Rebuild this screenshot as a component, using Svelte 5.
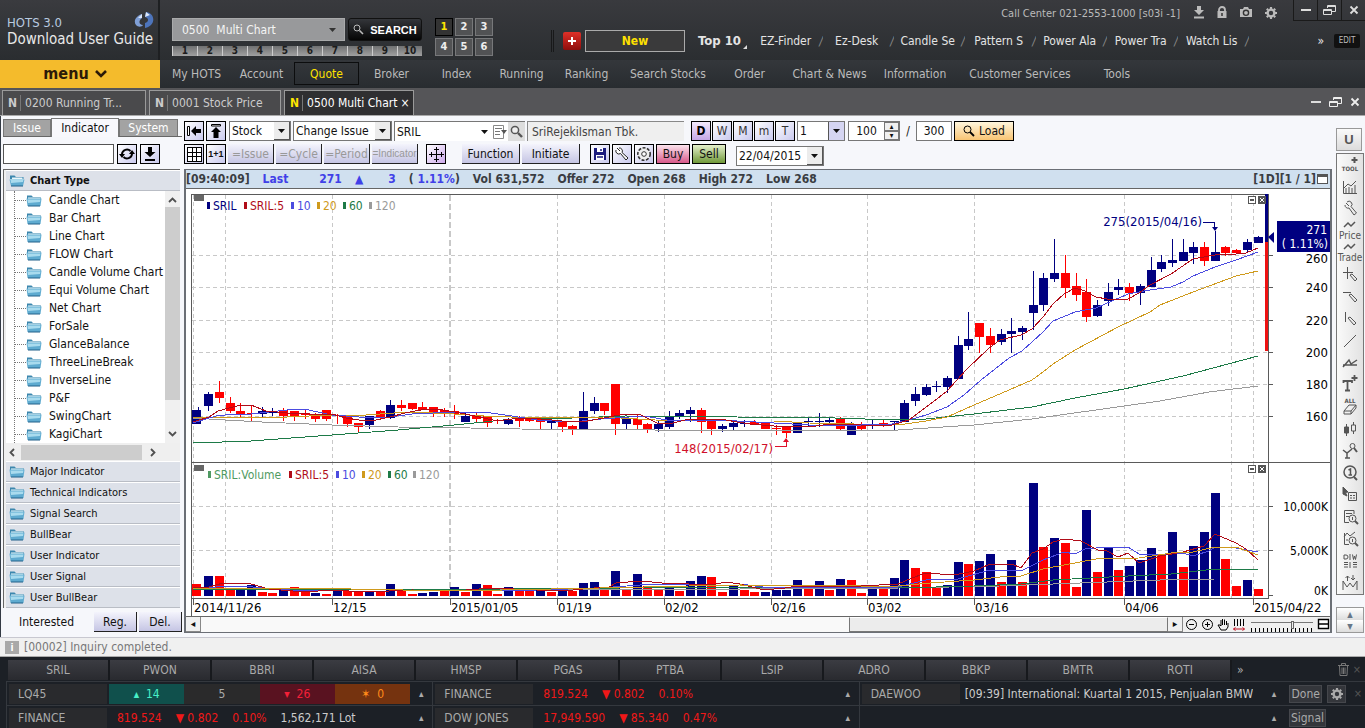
<script lang="ts">
  let command = $state('0500  Multi Chart');
  let period = $state('D');
  let activeDoc = $state(2);

  const slots = [1, 2, 3, 4, 5, 6, 7, 8, 9, 10];
  const screens = [1, 2, 3, 4, 5, 6];
  const favourites = ['EZ-Finder', 'Ez-Desk', 'Candle Se', 'Pattern S', 'Power Ala', 'Power Tra', 'Watch Lis'];

  const nav = [
    { label: 'My HOTS', width: 65 },
    { label: 'Account', width: 65 },
    { label: 'Quote', width: 65 },
    { label: 'Broker', width: 65 },
    { label: 'Index', width: 65 },
    { label: 'Running', width: 65 },
    { label: 'Ranking', width: 65 },
    { label: 'Search Stocks', width: 98 },
    { label: 'Order', width: 65 },
    { label: 'Chart & News', width: 95 },
    { label: 'Information', width: 76 },
    { label: 'Customer Services', width: 134 },
    { label: 'Tools', width: 60 }
  ];

  const docs = [
    { label: '0200 Running Tr...', width: 144 },
    { label: '0001 Stock Price', width: 132 },
    { label: '0500 Multi Chart', width: 130 }
  ];

  const tree = [
    'Candle Chart', 'Bar Chart', 'Line Chart', 'FLOW Chart', 'Candle Volume Chart', 'Equi Volume Chart', 'Net Chart',
    'ForSale', 'GlanceBalance', 'ThreeLineBreak', 'InverseLine', 'P&F', 'SwingChart', 'KagiChart'
  ];
  const groups = ['Major Indicator', 'Technical Indicators', 'Signal Search', 'BullBear', 'User Indicator', 'User Signal', 'User BullBear'];
  const periods = ['D', 'W', 'M', 'm', 'T'];
  const copies = ['=Issue', '=Cycle', '=Period', '=Indicator'];
  const tickers = ['SRIL', 'PWON', 'BBRI', 'AISA', 'HMSP', 'PGAS', 'PTBA', 'LSIP', 'ADRO', 'BBKP', 'BMTR', 'ROTI'];

  const tools = [
    'tool', 'chart', 'wrench', 'price', 'trade', 'cross', 'hline', 'vline', 'line', 'trend',
    'text', 'eraser', 'candles', 'fix', 'one', 'pointer', 'report', 'search', 'diw', 'range'
  ];

  // body top, body bottom, high, low, up/down
  const candles: [number, number, number, number, number][] = [
    [410, 424, 407, 424, 1], [394, 406, 392, 411, 1], [392, 398, 381, 403, 0], [403, 411, 397, 413, 0], [411, 414, 403, 417, 0],
    [413, 414, 405, 421, 0], [411, 414, 407, 417, 1], [412, 413, 408, 416, 1], [410, 416, 408, 421, 0], [411, 416, 411, 421, 0],
    [413, 415, 409, 419, 0], [414, 419, 413, 422, 0], [410, 419, 410, 421, 0], [415, 416, 414, 424, 0], [416, 424, 416, 427, 0],
    [423, 427, 423, 432, 0], [416, 425, 416, 429, 1], [411, 417, 410, 419, 0], [405, 418, 400, 419, 1], [405, 408, 400, 411, 0],
    [403, 409, 403, 410, 0], [407, 410, 402, 410, 0], [407, 412, 407, 417, 0], [410, 414, 408, 417, 0], [411, 414, 405, 419, 0],
    [416, 422, 412, 422, 1], [415, 419, 413, 423, 0], [416, 423, 416, 427, 0], [420, 421, 419, 424, 0], [420, 424, 418, 425, 1],
    [417, 421, 416, 427, 0], [419, 421, 418, 422, 0], [419, 422, 418, 429, 0], [421, 423, 420, 429, 1], [421, 427, 421, 432, 0],
    [426, 429, 425, 435, 0], [411, 429, 392, 429, 1], [403, 411, 397, 414, 1], [403, 411, 403, 415, 0], [384, 424, 384, 435, 0],
    [419, 424, 418, 429, 1], [419, 425, 415, 429, 0], [424, 429, 423, 433, 0], [424, 429, 420, 432, 1], [416, 427, 411, 429, 1],
    [413, 417, 410, 419, 1], [410, 414, 407, 422, 1], [410, 422, 408, 433, 0], [421, 429, 420, 435, 0], [426, 429, 424, 432, 1],
    [423, 427, 421, 431, 1], [423, 424, 420, 427, 1], [422, 425, 420, 425, 0], [423, 429, 423, 429, 0], [428, 429, 425, 435, 0],
    [427, 433, 427, 438, 0], [422, 433, 422, 433, 1], [421, 422, 417, 427, 1], [421, 422, 413, 427, 1], [420, 422, 418, 424, 1],
    [419, 429, 417, 430, 0], [426, 435, 422, 435, 1], [425, 429, 422, 430, 0], [424, 425, 420, 429, 1], [423, 425, 419, 427, 0],
    [421, 422, 421, 430, 1], [403, 422, 400, 422, 1], [394, 401, 387, 406, 1], [387, 395, 384, 396, 1], [386, 387, 381, 392, 1],
    [378, 387, 376, 393, 1], [345, 379, 336, 379, 1], [339, 346, 312, 350, 1], [323, 337, 323, 353, 0], [336, 345, 328, 353, 0],
    [334, 342, 329, 345, 1], [331, 334, 318, 353, 1], [328, 332, 326, 340, 1], [305, 313, 271, 330, 1], [278, 305, 273, 311, 1],
    [273, 279, 239, 282, 1], [273, 288, 255, 298, 0], [286, 295, 273, 301, 0], [292, 317, 279, 322, 0], [305, 316, 300, 317, 1],
    [292, 301, 283, 306, 1], [287, 290, 279, 295, 1], [287, 293, 283, 301, 0], [286, 293, 284, 305, 1], [270, 287, 257, 287, 1],
    [262, 269, 255, 272, 1], [260, 263, 239, 267, 1], [252, 261, 239, 261, 1], [247, 253, 242, 264, 1], [247, 261, 242, 266, 0],
    [252, 261, 231, 261, 1], [247, 253, 246, 256, 0], [250, 253, 249, 254, 0], [242, 250, 239, 252, 1], [237, 243, 236, 243, 1]
  ];

  const volumes = [
    12, 20, 20, 7, 6, 11, 4, 3, 7, 9, 4, 3, 2, 8, 5, 4, 5, 5, 12, 5, 2, 3, 4, 5, 9,
    4, 12, 11, 2, 9, 5, 5, 6, 4, 6, 5, 13, 14, 8, 25, 6, 22, 10, 6, 9, 5, 15, 20, 19, 4,
    10, 6, 4, 4, 6, 6, 16, 10, 15, 6, 17, 16, 3, 7, 7, 18, 36, 28, 24, 9, 11, 34, 32, 35, 42,
    14, 36, 14, 113, 49, 58, 53, 9, 86, 24, 49, 26, 30, 36, 48, 42, 64, 29, 50, 64, 103, 37, 10, 16, 7
  ];
  const downVolume = new Set([
    0, 2, 3, 6, 7, 9, 10, 12, 14, 15, 17, 19, 20, 23, 25, 27, 28, 30, 31, 33, 35, 38, 40, 42, 43, 45, 48, 49, 51, 52, 57, 59, 61,
    62, 64, 67, 68, 69, 72, 75, 77, 79, 81, 82, 84, 86, 90, 92, 96, 97, 99
  ]);

  const barX = (i: number) => Math.round(197.5 + i * 10.708);

  const priceLines = [
    { color: '#9a9a9a', points: '193,418 225,420 262,422 332,425 398,427 470,428 520,429 655,430 740,430 861,430 898,430 943,427 974,425 1032,419 1124,406 1160,401 1209,392 1258,386' },
    { color: '#1d7a47', points: '193,443 251,441 332,435 398,430 454,425 484,422 512,419 573,418 625,416 737,417 835,418 895,420 926,419 974,414 1032,407 1075,398 1124,389 1183,376 1258,356' },
    { color: '#cf9a1c', points: '193,417 225,417 287,417 332,415 366,415 394,413 412,412 454,414 484,416 537,418 604,417 655,420 737,421 774,421 809,423 898,425 926,421 947,417 974,405 1009,390 1032,380 1043,372 1053,364 1075,350 1118,327 1150,312 1160,305 1193,292 1236,276 1258,271' },
    { color: '#4b4be0', points: '193,423 216,416 225,415 251,414 287,410 304,409 332,415 359,417 390,417 412,414 454,412 484,412 512,416 537,420 573,422 601,419 644,416 673,421 691,420 737,421 774,423 809,425 861,425 892,424 909,420 926,415 947,407 964,395 981,380 1009,358 1022,351 1043,332 1053,321 1075,312 1096,308 1128,294 1150,290 1171,287 1183,282 1193,276 1215,267 1236,260 1258,252' },
    { color: '#b00c18', points: '193,422 209,417 218,411 229,408 241,405 251,405 266,411 287,413 309,414 332,414 346,418 359,420 376,420 390,417 405,413 426,409 437,409 455,412 475,416 497,421 519,418 541,419 562,421 582,422 604,418 625,414 641,415 657,423 673,423 689,419 709,419 726,420 737,422 750,424 774,426 797,426 809,427 830,424 861,425 878,426 892,425 909,420 933,402 947,391 967,369 988,349 1000,340 1021,335 1032,329 1043,317 1053,304 1064,294 1075,288 1085,291 1096,297 1107,299 1128,299 1139,293 1150,285 1171,274 1193,259 1215,255 1236,254 1246,253 1258,248' }
  ];

  const volumeLines = [
    { color: '#9a9a9a', points: '193,590 740,589 898,588 1000,586 1053,584 1107,582 1160,580 1215,579 1258,579' },
    { color: '#1d7a47', points: '193,589 500,589 740,587 898,588 974,586 1021,584 1053,580 1128,576 1171,574 1215,569 1258,569' },
    { color: '#4b4be0', points: '193,588 240,586 290,590 340,591 454,591 537,590 600,588 640,585 690,584 740,584 770,588 861,587 898,587 930,579 954,580 990,570 1021,571 1043,560 1064,552 1075,554 1085,549 1107,547 1128,547 1139,554 1171,554 1183,553 1193,556 1209,551 1215,547 1230,547 1258,552' },
    { color: '#b00c18', points: '193,588 209,587 223,583 251,584 269,589 305,592 332,590 366,592 412,590 454,591 491,588 537,590 573,590 594,588 609,587 616,583 641,581 662,583 689,584 716,584 726,582 740,584 764,590 785,588 797,586 861,586 898,584 912,578 926,573 954,575 974,571 990,564 1012,564 1021,568 1032,553 1043,549 1053,542 1064,539 1081,541 1098,550 1107,551 1118,557 1128,553 1139,563 1160,556 1183,552 1204,546 1215,534 1236,543 1246,549 1258,560' },
    { color: '#cf9a1c', points: '193,588 300,588 454,591 600,588 689,586 740,585 861,586 898,586 930,583 974,580 1000,577 1021,576 1043,569 1064,565 1096,559 1139,558 1171,553 1193,552 1215,547 1236,547 1258,555' }
  ];

  const dates = [
    { x: 193, label: '2014/11/26' },
    { x: 332, label: '12/15' },
    { x: 450, label: '2015/01/05' },
    { x: 557, label: '01/19' },
    { x: 664, label: '02/02' },
    { x: 771, label: '02/16' },
    { x: 867, label: '03/02' },
    { x: 974, label: '03/16' },
    { x: 1124, label: '04/06' },
    { x: 1253, label: '2015/04/22' }
  ];
  const gridX = [193, 225, 332, 557, 664, 771, 867, 974, 1124, 1231, 1253];
  const priceTicks = [
    { y: 255, label: '260' },
    { y: 287, label: '240' },
    { y: 320, label: '220' },
    { y: 352, label: '200' },
    { y: 384, label: '180' },
    { y: 416, label: '160' }
  ];
  const volumeTicks = [
    { y: 506, label: '10,000K' },
    { y: 550, label: '5,000K' }
  ];

  const priceLegend = [
    { x: 207, label: 'SRIL', color: '#000080' },
    { x: 244, label: 'SRIL:5', color: '#b00c18' },
    { x: 291, label: '10', color: '#4b4be0' },
    { x: 317, label: '20', color: '#cf9a1c' },
    { x: 343, label: '60', color: '#1d7a47' },
    { x: 369, label: '120', color: '#9a9a9a' }
  ];
  const volumeLegend = [
    { x: 208, label: 'SRIL:Volume', color: '#4f9a62' },
    { x: 289, label: 'SRIL:5', color: '#b00c18' },
    { x: 336, label: '10', color: '#4b4be0' },
    { x: 362, label: '20', color: '#cf9a1c' },
    { x: 388, label: '60', color: '#1d7a47' },
    { x: 413, label: '120', color: '#9a9a9a' }
  ];
</script>

{#snippet folder(open: boolean)}
  <svg width="16" height="13" viewBox="0 0 16 13" aria-hidden="true">
    <path d="M1 1.5 H5.5 L7 3 H14.5 V5 H1 Z" fill="#3d87ae" />
    <path d={open ? 'M3 3.5 H13.5 V6 H3 Z' : 'M2 3.5 H14 V5 H2 Z'} fill="#eaf6fb" />
    <path d={open ? 'M0.5 5.5 H15.5 L14 12 H2 Z' : 'M0.5 4.5 H15.5 L14.5 12 H1.5 Z'} fill="#5fabd0" />
    <path d="M1.5 5.500 H14.500 L14 8 L2 9 Z" fill="#a9dbee" />
    <path d="M2 12 H14" stroke="#22618a" />
  </svg>
{/snippet}

{#snippet down()}
  <svg width="7" height="4" viewBox="0 0 7 4" aria-hidden="true"><path d="M0 0 H7 L3.5 4 Z" fill="currentColor" /></svg>
{/snippet}

{#snippet gear()}
  <svg width="14" height="14" viewBox="0 0 14 14" aria-hidden="true">
    <circle cx="7" cy="7" r="3.4" fill="none" stroke="currentColor" stroke-width="2.4" />
    <path d="M7 1 V3 M7 11 V13 M1 7 H3 M11 7 H13 M2.8 2.8 L4 4 M10 10 L11.2 11.2 M2.8 11.2 L4 10 M10 4 L11.2 2.8" stroke="currentColor" stroke-width="2.2" />
  </svg>
{/snippet}

{#snippet restore()}
  <svg width="13" height="12" viewBox="0 0 13 12" aria-hidden="true">
    <path d="M4.5 4 V1.5 H12.5 V7.5 H9 M4.5 2.5 H12.5 M0.5 5.5 H8.5 V10.5 H0.5 Z M0.5 6.5 H8.5" fill="none" stroke="currentColor" />
  </svg>
{/snippet}

{#snippet closeX()}
  <svg width="10" height="10" viewBox="0 0 10 10" aria-hidden="true"><path d="M1.5 1.5 L8.5 8.5 M8.5 1.5 L1.5 8.5" stroke="currentColor" stroke-width="1.8" /></svg>
{/snippet}

<div class="app">
  <header>
    <div class="brand-col">
      <a class="brand" href="#guide">
        <span class="brand-name">HOTS 3.0</span>
        <span class="brand-guide">Download User Guide</span>
        <svg class="brand-logo" width="20" height="18" viewBox="0 0 20 18" aria-hidden="true">
          <path d="M8 2 C2 4 -1 9 2 13 C4 15.5 8 15 9 13 C5 13 4 9 8 6 Z" fill="#7f9fd6" />
          <path d="M12 0 C20 1 21 9 17 13 C15 15 12 16 11 16 L11 11 C15 10 15 6 11 5 Z" fill="#4d74bb" />
          <path d="M12 0 L11 5 L16 3 Z M8 2 L8 6 L4 6 Z" fill="#dbe6f8" />
        </svg>
      </a>
      <button class="menu">menu
        <svg width="12" height="8" viewBox="0 0 12 8" aria-hidden="true"><path d="M1 1 L6 6 L11 1" fill="none" stroke="#2c1a08" stroke-width="2.6" /></svg>
      </button>
    </div>

    <div class="head-main">
      <div class="head-top">
        <div class="command">
          <div class="command-row">
            <label class="command-box">
              <input bind:value={command} aria-label="Screen number" />
              {@render down()}
            </label>
            <button class="search">
              <svg width="11" height="11" viewBox="0 0 11 11" aria-hidden="true"><circle cx="4" cy="4" r="3" fill="none" stroke="#bbb" /><path d="M6.5 6.5 L10 10" stroke="#bbb" stroke-width="1.6" /></svg>
              SEARCH
            </button>
          </div>
          <div class="slots">
            {#each slots as slot}
              <button>{slot}</button>
            {/each}
          </div>
        </div>
        <div class="screens">
          {#each screens as screen}
            <button class:on={screen === 1}>{screen}</button>
          {/each}
        </div>

        <div class="head-right">
          <div class="call-row">
            <span class="call">Call Center 021-2553-1000 [s03i -1]</span>
            <span class="call-icons">
              <svg width="12" height="13" viewBox="0 0 12 13" aria-hidden="true"><path d="M4 0 H8 V4 H11 L6 9 L1 4 H4 Z M1 10.5 H11 V12.5 H1 Z" fill="currentColor" /></svg>
              <svg width="12" height="13" viewBox="0 0 12 13" aria-hidden="true"><path d="M3 6 V4 A3 3 0 0 1 9 4 V6" fill="none" stroke="currentColor" stroke-width="1.8" /><path d="M1.5 5 H10.5 V12 H1.5 Z" fill="currentColor" /><path d="M6 7 V10" stroke="#333" stroke-width="1.5" /></svg>
              <svg width="14" height="12" viewBox="0 0 14 12" aria-hidden="true"><path d="M1 3 H4 L5 1 H9 L10 3 H13 V11 H1 Z" fill="currentColor" /><circle cx="7" cy="6.8" r="2.6" fill="none" stroke="#333" stroke-width="1.4" /></svg>
              {@render gear()}
            </span>
            <div class="window-buttons">
              <button aria-label="Minimize"><span class="dash"></span></button>
              <button aria-label="Restore">{@render restore()}</button>
              <button aria-label="Close">{@render closeX()}</button>
            </div>
          </div>
          <div class="fav-row">
            <span class="grip"></span>
            <button class="plus" aria-label="Add">
              <svg width="8" height="8" viewBox="0 0 8 8" aria-hidden="true"><path d="M4 0 V8 M0 4 H8" stroke="#fff" stroke-width="2" /></svg>
            </button>
            <button class="new">New</button>
            <button class="top10">Top 10<svg width="4" height="4" viewBox="0 0 4 4" aria-hidden="true"><path d="M4 0 V4 H0 Z" fill="#ddd" /></svg></button>
            {#each favourites as fav}
              <a class="fav" href="#fav"><span>{fav}</span><i>/</i></a>
            {/each}
            <span class="more">»</span>
            <button class="edit">EDIT</button>
          </div>
        </div>
      </div>
      <nav>
        {#each nav as item}
          <a href="#nav" class:active={item.label === 'Quote'} style="width: {item.width}px">{item.label}</a>
        {/each}
      </nav>
    </div>
  </header>

  <div class="docs">
    {#each docs as doc, i}
      <button class="doc" class:active={activeDoc === i} style="width: {doc.width}px" onclick={() => (activeDoc = i)}>
        <b>N</b><span>{doc.label}</span>{#if i === 2}<em>×</em>{/if}
      </button>
    {/each}
    <div class="doc-buttons">
      <span class="dash"></span>
      {@render restore()}
      {@render closeX()}
    </div>
  </div>

  <main>
    <aside>
      <div class="side-tabs">
        <button>Issue</button>
        <button class="active">Indicator</button>
        <button>System</button>
      </div>
      <div class="side-find">
        <input aria-label="Find indicator" />
        <button class="tb" aria-label="Refresh">
          <svg width="16" height="16" viewBox="0 0 16 16" aria-hidden="true"><path d="M3 8 A5 5 0 0 1 11.5 5" fill="none" stroke="#000" stroke-width="2" /><path d="M13 8 A5 5 0 0 1 4.5 11" fill="none" stroke="#000" stroke-width="2" /><path d="M0 8 H6 L3 12 Z M10 8 H16 L13 4 Z" fill="#000" /></svg>
        </button>
        <button class="tb" aria-label="Download">
          <svg width="14" height="16" viewBox="0 0 14 16" aria-hidden="true"><path d="M5 1 H9 V6 H12.5 L7 11 L1.5 6 H5 Z M2 13 H12 V15 H2 Z" fill="#000" /></svg>
        </button>
      </div>
      <div class="list">
        <div class="group open">{@render folder(true)}Chart Type</div>
        <div class="tree-box">
          <ul class="tree">
            {#each tree as node}
              <li>{@render folder(false)}<span>{node}</span></li>
            {/each}
          </ul>
          <div class="vscroll">
            <svg width="9" height="6" viewBox="0 0 9 6" aria-hidden="true"><path d="M1 5 L4.5 1.5 L8 5" fill="none" stroke="#505050" stroke-width="1.8" /></svg>
            <span class="vthumb"></span>
            <svg width="9" height="6" viewBox="0 0 9 6" aria-hidden="true"><path d="M1 1 L4.5 4.5 L8 1" fill="none" stroke="#505050" stroke-width="1.8" /></svg>
          </div>
        </div>
        <div class="hscroll">
          <svg width="6" height="9" viewBox="0 0 6 9" aria-hidden="true"><path d="M5 1 L1.5 4.5 L5 8" fill="none" stroke="#505050" stroke-width="1.8" /></svg>
          <span class="hthumb"></span>
          <svg width="6" height="9" viewBox="0 0 6 9" aria-hidden="true"><path d="M1 1 L4.5 4.5 L1 8" fill="none" stroke="#505050" stroke-width="1.8" /></svg>
        </div>
        {#each groups as group}
          <div class="group">{@render folder(false)}{group}</div>
        {/each}
      </div>
      <div class="side-foot">
        <span>Interested</span>
        <button class="flat">Reg.</button>
        <button class="flat">Del.</button>
      </div>
    </aside>

    <section class="center">
      <div class="toolbar">
        <button class="tb" aria-label="Collapse left">
          <svg width="16" height="12" viewBox="0 0 16 12" aria-hidden="true"><path d="M1.5 1.5 H3.5 V10.5 H1.5 Z" fill="#fff" stroke="#000" /><path d="M5 6 L10 1 V4 H15 V8 H10 V11 Z" fill="#000" /></svg>
        </button>
        <button class="tb" aria-label="Collapse top">
          <svg width="12" height="16" viewBox="0 0 12 16" aria-hidden="true"><path d="M1.5 1.5 H10.5 V3 H1.5 Z" fill="#fff" stroke="#000" /><path d="M6 4 L11 9 H8.5 V15 H3.5 V9 H1 Z" fill="#000" /></svg>
        </button>
        <label class="drop w-stock"><select aria-label="Market"><option>Stock</option></select><span class="knob">{@render down()}</span></label>
        <label class="drop w-change"><select aria-label="Mode"><option>Change Issue</option></select><span class="knob">{@render down()}</span></label>
        <div class="code">
          <input value="SRIL" aria-label="Stock code" />
          {@render down()}
          <svg width="16" height="14" viewBox="0 0 16 14" aria-hidden="true"><path d="M1.5 0.5 H11.5 V13.5 H1.5 Z" fill="#fff" stroke="#888" /><path d="M3 3.5 H10 M3 6.5 H8 M3 9.5 H8" stroke="#777" /><path d="M9 5 H15 L12 9 Z" fill="#555" /></svg>
          <button aria-label="Find stock">
            <svg width="13" height="13" viewBox="0 0 13 13" aria-hidden="true"><circle cx="5" cy="5" r="3.6" fill="#eee" stroke="#555" stroke-width="1.5" /><path d="M8 8 L12 12" stroke="#555" stroke-width="2.4" /></svg>
          </button>
        </div>
        <input class="name" value="SriRejekiIsman Tbk." aria-label="Stock name" readonly />
        <div class="periods">
          {#each periods as p}
            <button class="tb period" class:on={period === p} onclick={() => (period = p)}>{p}</button>
          {/each}
        </div>
        <label class="drop w-unit"><select aria-label="Unit"><option>1</option></select><span class="knob lilac">{@render down()}</span></label>
        <div class="spin">
          <input value="100" aria-label="Bars" />
          <span><button aria-label="More bars">▴</button><button aria-label="Fewer bars">▾</button></span>
        </div>
        <span class="slash">/</span>
        <input class="total" value="300" aria-label="Total bars" />
        <button class="load">
          <svg width="12" height="12" viewBox="0 0 12 12" aria-hidden="true"><circle cx="4.5" cy="4.5" r="3.5" fill="none" stroke="#000" /><path d="M7 7 L11 11" stroke="#000" stroke-width="1.8" /></svg>
          Load
        </button>
      </div>

      <div class="toolbar second">
        <button class="tb" aria-label="Grid">
          <svg width="15" height="15" viewBox="0 0 15 15" aria-hidden="true" shape-rendering="crispEdges"><path d="M0.5 0.5 H14.5 V14.5 H0.5 Z M0.5 5.5 H14.5 M0.5 9.5 H14.5 M5.5 0 V15 M9.5 0 V15" fill="#fff" stroke="#000" /></svg>
        </button>
        <button class="tb tiny">1+1</button>
        {#each copies as copy}
          <button class="flat off" class:small={copy === '=Indicator'} disabled>{copy}</button>
        {/each}
        <button class="tb plum" aria-label="Crosshair">
          <svg width="15" height="15" viewBox="0 0 15 15" aria-hidden="true" shape-rendering="crispEdges"><path d="M7.5 0 V15 M0 7.5 H15 M5 2.5 H10 M5 12.5 H10 M2.5 5 V10 M12.5 5 V10" stroke="#000" /></svg>
        </button>
        <button class="flat func">Function</button>
        <button class="flat init">Initiate</button>
        <button class="tb save" aria-label="Save">
          <svg width="14" height="14" viewBox="0 0 14 14" aria-hidden="true"><path d="M1 1 H13 V13 H1 Z" fill="#1b1b7e" /><path d="M4 1 H10 V5 H4 Z M3 8 H11 V13 H3 Z" fill="#fff" /><path d="M8 2 V4 M4 10 H10" stroke="#1b1b7e" stroke-width="1.5" /></svg>
        </button>
        <button class="tb" aria-label="Settings">
          <svg width="14" height="14" viewBox="0 0 14 14" aria-hidden="true"><path d="M2 1 L5 4 M1 3 A3 3 0 0 0 5.5 6.5 L11 13 L13 11 L7 5.5 A3 3 0 0 0 4 1" fill="#fff" stroke="#222" /></svg>
        </button>
        <button class="tb" aria-label="Options">
          <svg width="16" height="16" viewBox="0 0 16 16" aria-hidden="true"><circle cx="8" cy="8" r="6.2" fill="#eee" stroke="#333" stroke-width="1.6" stroke-dasharray="3 1.5" /><circle cx="8" cy="8" r="2.3" fill="#fff" stroke="#333" /></svg>
        </button>
        <button class="trade buy">Buy</button>
        <button class="trade sell">Sell</button>
        <label class="drop w-date"><select aria-label="Date"><option>22/04/2015</option></select><span class="knob">{@render down()}</span></label>
      </div>

      <div class="frame">
        <div class="info">
          <span>[09:40:09]</span>
          <span class="up">Last</span>
          <span class="up price">271</span>
          <span class="up">▲</span>
          <span class="up diff">3</span>
          <span>( <b class="up">1.11%</b>)</span>
          <span>Vol 631,572</span>
          <span>Offer 272</span>
          <span>Open 268</span>
          <span>High 272</span>
          <span>Low 268</span>
          <span class="page">[1D][1 / 1]</span>
          <button aria-label="Window"></button>
        </div>

        <svg class="chart" viewBox="186 189 1144 427" role="img" aria-label="SRIL daily chart">
          <rect x="186" y="189" width="1144" height="427" fill="#fff" />
          <g shape-rendering="crispEdges">
            <g stroke="#c8c8c8" stroke-dasharray="4 3">
              {#each gridX as x}
                <path d="M{x + 0.5} 195 V598" />
              {/each}
              {#each [...priceTicks, ...volumeTicks] as tick}
                <path d="M192 {tick.y + 0.5} H1268" />
              {/each}
              <path d="M450 195 V598" stroke-width="2" stroke-dasharray="6 3" />
            </g>
            <path d="M191.5 616 V194.5 H1268.5 V598.5 H191.5 M191 462.5 H1330" fill="none" stroke="#5a5a5a" />

            {#each candles as [top, bottom, high, low, up], i}
              <g fill={up ? '#000080' : '#ff0000'}>
                <rect x={i === 0 ? 192 : barX(i) - 4} y={top} width="9" height={Math.max(bottom - top, 1)} />
                <rect x={barX(i)} y={high} width="1" height={low - high} />
              </g>
            {/each}
            {#each volumes as height, i}
              <rect x={i === 0 ? 192 : barX(i) - 4} y={596 - height} width="9" {height} fill={downVolume.has(i) ? '#ff0000' : '#000080'} />
            {/each}
            {#each [...priceLines, ...volumeLines] as line}
              <polyline points={line.points} fill="none" stroke={line.color} />
            {/each}

            <rect x="1265" y="194" width="3" height="48" fill="#000080" />
            <rect x="1265" y="242" width="3" height="109" fill="#ee1111" />
            {#each [...priceTicks, ...volumeTicks, { y: 595, label: '' }] as tick}
              <path d="M1269 {tick.y + 0.5} H1273" stroke="#5a5a5a" />
            {/each}
            {#each dates as date}
              <path d="M{date.x + 0.5} 599 V605" stroke="#5a5a5a" />
            {/each}
            <path d="M1203 222.5 H1214.5 V230" fill="none" stroke="#000080" />
            <path d="M775 446.5 H786.5 V439" fill="none" stroke="#e0102a" />
            {#each [195, 465] as y}
              <rect x="194" {y} width="10" height="6" fill="#666" />
            {/each}
            {#each [196, 465] as y}
              <rect x="1248.5" y={y + 0.5} width="7" height="7" fill="#fff" stroke="#555" />
              <rect x="1250" y={y + 3} width="4" height="2" fill="#555" />
              <rect x="1258" {y} width="8" height="8" fill="#555" />
            {/each}
            {#each priceLegend as item}
              <rect x={item.x} y="202" width="3" height="7" fill={item.color} />
            {/each}
            {#each volumeLegend as item}
              <rect x={item.x} y="471" width="3" height="7" fill={item.color} />
            {/each}
            <rect x="1277" y="221" width="53" height="31" fill="#000080" />
          </g>

          <path d="M1260 198 L1264 202 M1264 198 L1260 202 M1260 467 L1264 471 M1264 467 L1260 471" stroke="#fff" />
          <path d="M1268 237 L1274 232 V243 Z M1212 227 H1218 L1215 231 Z" fill="#000080" />
          <path d="M783 442 H789 L786 438 Z" fill="#e0102a" />

          {#each priceLegend as item}
            <text x={item.x + 6} y="210" fill={item.color}>{item.label}</text>
          {/each}
          {#each volumeLegend as item}
            <text x={item.x + 6} y="479" fill={item.color}>{item.label}</text>
          {/each}
          <text class="scale" x="1202" y="226" text-anchor="end" fill="#000080">275(2015/04/16)</text>
          <text class="scale" x="773" y="453" text-anchor="end" fill="#d0102a">148(2015/02/17)</text>
          {#each priceTicks as tick}
            <text class="scale" x="1328" y={tick.y + (tick.label === '260' ? 8 : 5)} text-anchor="end">{tick.label}</text>
          {/each}
          <text x="1327" y="234" text-anchor="end" fill="#fff">271</text>
          <text x="1328" y="248" text-anchor="end" fill="#fff">( 1.11%)</text>
          {#each volumeTicks as tick}
            <text x="1328" y={tick.y + 5} text-anchor="end">{tick.label}</text>
          {/each}
          <text x="1328" y="595" text-anchor="end">0K</text>
          {#each dates as date}
            <text class="scale" x={date.x + 1} y="612">{date.label}</text>
          {/each}
        </svg>

        <div class="chart-foot">
          <button class="arrow" aria-label="Scroll left">◂</button>
          <div class="track"><span></span></div>
          <button class="arrow" aria-label="Scroll right">▸</button>
          <svg width="60" height="15" viewBox="0 0 60 15" aria-hidden="true" fill="none" stroke="#000">
            <circle cx="6.5" cy="7.5" r="5" /><path d="M4 7.5 H9" />
            <circle cx="22.5" cy="7.5" r="5" /><path d="M20 7.5 H25 M22.5 5 V10" />
            <path d="M36 13 L33 8 L35 8 L36 9 V3 M37.5 8 V2 M39.5 8 V2.5 M41.5 8 V4 M43 6 V10 L41 13 H36" />
            <path d="M49.5 2 V9 M52.5 2 V9 M55.5 2 V9 M58.5 2 V9" />
            <path d="M48.5 12 H59.5 M50.5 10.5 L48.5 12 L50.5 13.5 M57.5 10.5 L59.5 12 L57.5 13.5" stroke="#c01020" />
          </svg>
          <input type="range" min="0" max="100" value="68" aria-label="Zoom" />
          <svg width="13" height="13" viewBox="0 0 13 13" aria-hidden="true"><path d="M1.5 1.5 H11.5 V10.5 H1.5 Z M1.5 6 H11.5" fill="#fff" stroke="#000" stroke-width="1.4" /></svg>
        </div>
      </div>
    </section>

    <div class="rail">
      <button class="u">U</button>
      <div class="rail-box">
        {#each tools as tool}
          <button aria-label={tool}>
            <svg width="26" height="22" viewBox="0 0 26 22" fill="none" stroke="#555" aria-hidden="true">
              {#if tool === 'tool'}
                <path d="M17.5 3 V9 M14.5 6 H20.5" stroke-width="2" /><text class="micro" x="13" y="17">TOOL</text>
              {:else if tool === 'chart'}
                <path d="M6.5 5 V17.5 H20 M9 17 V12 M12 17 V11 M15 17 V12 M18 17 V9" /><path d="M7 12 L11 8 L14 10 L19 5" />
              {:else if tool === 'wrench'}
                <path d="M9 5 L12 8 M8 7 A3 3 0 0 0 12 10 L17 17 L19.5 15 L14 8.5 A3 3 0 0 0 10 4" />
              {:else if tool === 'price' || tool === 'trade'}
                <path d="M7 7 L11 3 L14 6 L18 2" stroke-width="1.5" /><text class="word" x="13" y="19">{tool === 'price' ? 'Price' : 'Trade'}</text>
              {:else if tool === 'cross'}
                <path d="M10.5 3 V15 M6 8.5 H16 M13 11 L15 10 L20 15 L18 17 Z" />
              {:else if tool === 'hline'}
                <path d="M6 6.5 H14 M12 9 L14 8 L20 14 L18 16 Z" />
              {:else if tool === 'vline'}
                <path d="M8.5 4 V14 M11 10 L13 9 L19 15 L17 17 Z" />
              {:else if tool === 'line'}
                <path d="M7 17 L19 5" />
              {:else if tool === 'trend'}
                <path d="M6 15 L12 8 L14 12 L20 8 M6 13 H20" stroke-width="1.5" />
              {:else if tool === 'text'}
                <path d="M6.5 9 V7 H15 V9 M10.5 7 V16 M8 16.5 H13" stroke-width="1.8" /><path d="M17.5 1 V7 M14.5 4 H20.5" stroke-width="1.8" />
              {:else if tool === 'eraser'}
                <text class="micro" x="13" y="7">ALL</text><path d="M7 15 L12 9 H19 L14 15 Z M7 15 V18 H14 L19 12 V9 M14 15 V18" />
              {:else if tool === 'candles'}
                <path d="M9.5 6 V18" /><path d="M7.5 9 H11.5 V15 H7.5 Z" fill="#555" /><path d="M16.5 4 V7 M16.5 13 V16 M14.5 7 H18.5 V13 H14.5 Z" />
              {:else if tool === 'fix'}
                <path d="M6 10 L10 13 L15 9 M10 13 V18 M8 18 H13" stroke-width="1.5" /><circle cx="15.5" cy="6" r="2.5" /><path d="M17 8 L20 12" stroke-width="2" />
              {:else if tool === 'one'}
                <circle cx="13" cy="10" r="6" stroke-width="1.5" /><path d="M11.5 8 L13.5 7 V13 M11.5 13 H15" stroke-width="1.5" /><path d="M17 15 L20 18" stroke-width="2" />
              {:else if tool === 'pointer'}
                <path d="M6 3 L11 8 L8.5 8.5 L10 12 L8 11 L6 10 Z" fill="#555" /><path d="M11.5 8.5 H19.5 V16.5 H11.5 Z M13 11.5 H15 M16 11.5 H18 M13 14 H15 M16 14 H18" />
              {:else if tool === 'report' || tool === 'search'}
                <path d={tool === 'report' ? 'M17 8 V4.5 H7.5 V16.5 H12 M9 7.5 H15 M9 10.5 H12' : 'M7.5 5 V16.5 H12 M7 9 L10 5 L13 8 L18 4 M9 12 H11'} />
                <circle cx="15.5" cy="12.5" r="3.5" /><path d="M18 15 L21 18" stroke-width="2" /><path d="M15.5 11 V14" />
              {:else if tool === 'diw'}
                <path d="M7 5 H9 Q11 5 11 7 T9 9 H7 Z M13 4 V10 M15.5 4.500 L16.5 9.5 L17.5 6 L18.5 9.5 L19.5 4.5 M7 12.5 H11 M7 14.5 H11 M7 17 H11 M13 12 V18 M16 12.5 H20 M16 14.5 H20 M16 17 H20" />
              {:else}
                <path d="M6 18 V9 L10 15 L13 11 L16 15 L20 9 V18" /><path d="M10.5 9 V4 M8.5 6 L10.5 4 L12.5 6 M16 3 V8 M14 6 L16 8 L18 6" />
              {/if}
            </svg>
          </button>
        {/each}
      </div>
      <div class="rail-spin">
        <button aria-label="Scroll tools up">▴</button>
        <button aria-label="Scroll tools down">▾</button>
      </div>
    </div>
  </main>

  <div class="status"><i>i</i>[00002] Inquiry completed.</div>

  <footer>
    <div class="tickers">
      {#each tickers as code}
        <button>{code}</button>
      {/each}
      <span>»</span>
      <svg class="trash" width="11" height="13" viewBox="0 0 11 13" fill="none" stroke="#777" aria-hidden="true"><path d="M0 2.5 H11 M3.5 2 V0.5 H7.5 V2 M1.5 3 L2 12.5 H9 L9.5 3 M4 4.5 V11 M5.5 4.5 V11 M7 4.5 V11" /></svg>
      <small>×</small>
    </div>
    <div class="boards">
      <div class="board">
        <span class="tag">LQ45</span>
        <span class="cell teal">▴&nbsp; 14</span>
        <span class="cell grey">5</span>
        <span class="cell wine">▾&nbsp; 26</span>
        <span class="cell rust">✶&nbsp; 0</span>
        <button aria-label="Expand">▴</button>
      </div>
      <div class="board">
        <span class="tag">FINANCE</span>
        <span class="loss">819.524</span><span class="loss">▼ 0.802</span><span class="loss">0.10%</span>
        <button aria-label="Expand">▴</button>
      </div>
      <div class="board">
        <span class="tag">DAEWOO</span>
        <span class="news">[09:39] International: Kuartal 1 2015, Penjualan BMW</span>
        <button aria-label="Expand">▴</button>
      </div>
      <div class="board-end"><button>Done</button><button class="cog" aria-label="Ticker settings">{@render gear()}</button><small>×</small></div>
    </div>
    <div class="boards">
      <div class="board">
        <span class="tag">FINANCE</span>
        <span class="loss">819.524</span><span class="loss">▼ 0.802</span><span class="loss">0.10%</span><span class="lot">1,562,171 Lot</span>
        <button aria-label="Expand">▴</button>
      </div>
      <div class="board">
        <span class="tag">DOW JONES</span>
        <span class="loss">17,949.590</span><span class="loss">▼ 85.340</span><span class="loss">0.47%</span>
        <button aria-label="Expand">▴</button>
      </div>
      <div class="board">
        <button aria-label="Expand">▴</button>
      </div>
      <div class="board-end"><button>Signal</button></div>
    </div>
  </footer>
</div>

<style>
  :global(body) {
    background: #1c2026;
  }

  .app {
    font: 12px/16px 'DejaVu Sans Condensed', 'DejaVu Sans', sans-serif;
    color: #111;
    overflow: hidden;
  }

  .app * {
    box-sizing: border-box;
  }

  button, input, select {
    font: inherit;
    color: inherit;
    margin: 0;
    padding: 0;
    border: 0;
    border-radius: 0;
    background: none;
    min-width: 0;
    white-space: nowrap;
  }

  button {
    display: flex;
    align-items: center;
    justify-content: center;
  }

  a {
    color: inherit;
    text-decoration: none;
  }

  svg {
    display: block;
    flex: none;
  }

  header {
    display: flex;
    color: #ccc;
    background: #303236;
  }

  .brand-col {
    width: 160px;
    flex: none;
  }

  .brand {
    display: flex;
    flex-direction: column;
    position: relative;
    height: 60px;
    padding: 15px 0 0 7px;
    background: linear-gradient(#3a3b3f, #2a2d30);
    border-right: 2px solid #1e2022;
    white-space: nowrap;
  }

  .brand-name {
    color: #b9cbe0;
    font-size: 13px;
  }

  .brand-guide {
    color: #e8e8e8;
    font-size: 15px;
  }

  .brand-logo {
    position: absolute;
    top: 12px;
    right: 4px;
  }

  .menu {
    width: 100%;
    height: 28px;
    gap: 6px;
    padding-right: 10px;
    background: #f4bb2c;
    color: #2c1a08;
    font-size: 16px;
    font-weight: bold;
  }

  .head-main {
    flex: 1;
    min-width: 0;
  }

  .head-top {
    display: flex;
    height: 60px;
    background: linear-gradient(#393a3e, #2b2e31);
  }

  .command {
    padding: 18px 0 0 12px;
  }

  .command-row {
    display: flex;
    gap: 3px;
  }

  .command-box {
    display: flex;
    align-items: center;
    width: 173px;
    height: 23px;
    padding: 0 8px 0 9px;
    background: #98999b;
    border: 1px solid #a9aaab;
    color: #333;
  }

  .command-box input {
    flex: 1;
    color: #f4f4f4;
    white-space: pre;
  }

  .search {
    width: 74px;
    height: 23px;
    gap: 6px;
    background: linear-gradient(#34363a, #050505);
    border: 1px solid #111;
    border-radius: 3px;
    color: #fff;
    font: bold 11px/16px 'Liberation Sans', sans-serif;
  }

  .slots {
    display: flex;
    margin-top: 5px;
  }

  .slots button {
    width: 25px;
    height: 10px;
    background: linear-gradient(#707172, #a0a0a0);
    border-left: 1px solid #ccc;
    color: #1c1c1c;
    font-size: 10px;
    font-weight: bold;
    line-height: 10px;
  }

  .screens {
    display: grid;
    grid-template-columns: repeat(3, 18px);
    grid-auto-rows: 18px;
    gap: 2px;
    padding: 18px 0 0 13px;
  }

  .screens button {
    background: #515254;
    border: 1px solid #77787a;
    color: #eee;
    font-size: 11px;
    font-weight: bold;
  }

  .screens button.on {
    background: #333;
    border-color: #000;
    color: #ffe600;
  }

  .head-right {
    flex: 1;
    min-width: 0;
    margin-left: 58px;
  }

  .call-row {
    display: flex;
    justify-content: flex-end;
    height: 26px;
    color: #bbb;
  }

  .call {
    padding-top: 6px;
    font-size: 11px;
    white-space: nowrap;
  }

  .call-icons {
    display: flex;
    gap: 11px;
    padding: 6px 15px 0 13px;
  }

  .window-buttons {
    display: flex;
  }

  .window-buttons button {
    width: 24px;
    height: 21px;
    border: 1px solid #1a1a1a;
    border-width: 0 0 1px 1px;
    color: #ddd;
  }

  .dash {
    width: 10px;
    height: 2px;
    background: #ddd;
  }

  .fav-row {
    display: flex;
    align-items: center;
    height: 30px;
    color: #e4e4e4;
    white-space: nowrap;
  }

  .grip {
    width: 3px;
    height: 22px;
    border: 1px solid #18191a;
    border-width: 0 1px;
    margin-right: 9px;
  }

  .plus {
    width: 18px;
    height: 18px;
    margin-right: 4px;
    background: linear-gradient(#e03028, #8e0e0c);
    border-radius: 2px;
  }

  .new {
    width: 100px;
    height: 22px;
    background: #3a3a3b;
    border: 1px solid #aaa;
    color: #ffe100;
    font-weight: bold;
  }

  .top10 {
    width: 67px;
    padding-left: 8px;
    gap: 2px;
    align-items: flex-end;
    font-size: 13px;
    font-weight: bold;
  }

  .fav {
    display: flex;
    width: 71px;
    align-items: center;
    overflow: hidden;
  }

  .fav span {
    flex: 1;
    text-align: center;
  }

  .fav i {
    color: #888;
  }

  .more {
    margin-left: auto;
    padding-right: 10px;
  }

  .edit {
    width: 26px;
    height: 14px;
    margin-right: 5px;
    background: #111;
    border-radius: 2px;
    color: #bbb;
    font-size: 8px;
  }

  nav {
    display: flex;
    height: 28px;
    padding: 2px 0 3px 4px;
    background: linear-gradient(#34373b, #282c30);
    color: #bbb;
  }

  nav a {
    display: flex;
    align-items: center;
    justify-content: center;
    white-space: nowrap;
  }

  nav a.active {
    color: #ffe100;
    border: 1px solid #0c0d0e;
  }

  .docs {
    display: flex;
    align-items: flex-end;
    gap: 3px;
    height: 28px;
    padding-left: 2px;
    background: #555558;
    border-bottom: 1px solid #aaa;
    color: #ccc;
  }

  .doc {
    height: 25px;
    justify-content: flex-start;
    padding-left: 5px;
    background: #4a4a4c;
    border: 1px solid #9a9a9a;
    border-bottom: 0;
  }

  .doc span {
    margin-left: 3px;
    padding-left: 4px;
    border-left: 1px solid #777;
  }

  .doc em {
    margin-left: 3px;
    font-style: normal;
  }

  .doc.active {
    background: #2f2f31;
    color: #fff;
  }

  .doc.active b {
    color: #ffe600;
  }

  .doc-buttons {
    display: flex;
    align-items: center;
    gap: 8px;
    height: 27px;
    margin-left: auto;
    padding-right: 5px;
    color: #eee;
  }

  main {
    display: flex;
    background: #f6f7fb;
    border-left: 1px solid #333a44;
  }

  aside {
    display: flex;
    flex-direction: column;
    width: 183px;
    flex: none;
    padding: 2px 2px 0 2px;
  }

  .side-tabs {
    display: flex;
    align-items: flex-end;
    height: 19px;
    border-bottom: 1px solid #666;
  }

  .side-tabs button {
    width: 48px;
    height: 17px;
    background: #a3a3a3;
    border: 1px solid #777;
    border-bottom: 0;
    color: #fff;
  }

  .side-tabs button.active {
    width: 68px;
    height: 19px;
    margin-bottom: -1px;
    background: #f8f8fc;
    color: #111;
  }

  .side-tabs button:last-child {
    width: 59px;
  }

  .side-find {
    display: flex;
    gap: 3px;
    padding: 7px 0 4px;
  }

  .side-find input {
    width: 111px;
    height: 20px;
    border: 1px solid #555;
    background: #fff;
  }

  .tb {
    flex: none;
    width: 20px;
    height: 20px;
    background: linear-gradient(135deg, #fff, #c9c9ee);
    border: 1px solid #000;
  }

  .flat {
    height: 20px;
    background: linear-gradient(#f4f4fc, #c5c5e4);
    border: 1px solid #222;
    border-width: 0 1px 1px 0;
  }

  .list {
    width: 177px;
    margin-top: 1px;
    padding-left: 2px;
    background: #efefef;
    border: 1px solid #666;
    border-width: 1px 0 0 1px;
  }

  .group {
    display: flex;
    align-items: center;
    gap: 5px;
    height: 21px;
    padding-left: 3px;
    background: #dde1e9;
    border-bottom: 1px solid #b9bdc5;
    border-top: 1px solid #fff;
    font-size: 11px;
  }

  .group.open {
    font-weight: bold;
  }

  .tree-box {
    display: flex;
    background: #fff;
  }

  .tree {
    flex: 1;
    margin: 0 0 0 8px;
    padding: 0;
    list-style: none;
    border-left: 1px dotted #777;
    min-width: 0;
  }

  .tree li {
    display: flex;
    align-items: center;
    height: 18px;
    white-space: nowrap;
  }

  .tree li::before {
    content: '';
    width: 11px;
    border-top: 1px dotted #777;
  }

  .tree li span {
    margin-left: 7px;
  }

  .vscroll {
    display: flex;
    flex-direction: column;
    align-items: center;
    width: 15px;
    padding: 6px 0;
    background: #f0f0f0;
  }

  .vthumb {
    width: 15px;
    height: 193px;
    margin: 4px 0 auto;
    background: #cdcdcd;
  }

  .hscroll {
    display: flex;
    align-items: center;
    height: 18px;
    padding-left: 3px;
  }

  .hthumb {
    width: 121px;
    height: 15px;
    margin: 0 8px 0 6px;
    background: #cdcdcd;
  }

  .side-foot {
    display: flex;
    align-items: center;
    gap: 2px;
    margin-top: 4px;
  }

  .side-foot span {
    flex: 1;
    padding-left: 16px;
  }

  .side-foot .flat {
    width: 43px;
  }

  .center {
    flex: 1;
    min-width: 0;
    padding: 5px 0 4px;
  }

  .toolbar {
    display: flex;
    align-items: center;
    gap: 2px;
    height: 20px;
    margin-bottom: 3px;
    white-space: nowrap;
  }

  .toolbar.second {
    margin-bottom: 5px;
  }

  .drop {
    display: flex;
    height: 20px;
    background: #fff;
    border: 1px solid #777;
    flex: none;
  }

  .drop select {
    flex: 1;
    appearance: none;
    padding-left: 2px;
    background: #fff;
  }

  .knob {
    display: flex;
    align-items: center;
    justify-content: center;
    width: 16px;
    background: #ececec;
    border: 1px solid #555;
    border-width: 0 1px 1px 0;
  }

  .knob.lilac {
    background: #d5d5f2;
    border-width: 0 0 0 1px;
  }

  .w-stock { width: 62px; margin-left: 1px; }
  .w-change { width: 99px; }
  .w-unit { width: 48px; }
  .w-date { width: 88px; margin: 4px 0 0 8px; }

  .code {
    display: flex;
    align-items: center;
    width: 131px;
    height: 20px;
    flex: none;
    gap: 4px;
    background: #fff;
    border-left: 1px solid #777;
    border-top: 1px solid #777;
  }

  .code input {
    flex: 1;
    padding-left: 2px;
  }

  .code button {
    width: 17px;
    height: 19px;
    margin-left: -4px;
    background: #ddd;
  }

  .name {
    width: 157px;
    height: 20px;
    padding-left: 4px;
    background: #efefef;
    border: 1px solid #888;
    border-width: 1px 0 0 1px;
    color: #444;
  }

  .periods {
    display: flex;
    gap: 1px;
    margin-left: 5px;
  }

  .period {
    color: #333;
  }

  .period.on {
    background: linear-gradient(#f3e9fb, #c5a6e6);
    font-weight: bold;
    color: #000;
  }

  .spin {
    display: flex;
    width: 52px;
    height: 20px;
    margin-left: 1px;
    border: 1px solid #777;
    background: #fff;
  }

  .spin input {
    width: 35px;
    text-align: center;
  }

  .spin span {
    flex: 1;
  }

  .spin button {
    width: 100%;
    height: 9px;
    border: 1px solid #777;
    background: #f0f0f0;
    font-size: 8px;
    line-height: 6px;
  }

  .slash {
    width: 12px;
    text-align: center;
  }

  .total {
    width: 36px;
    height: 20px;
    border: 1px solid #777;
    background: #fff;
    text-align: center;
  }

  .load {
    width: 60px;
    height: 20px;
    gap: 4px;
    background: linear-gradient(#fff6dd, #f8c473);
    border: 1px solid #000;
  }

  .tiny {
    font: bold 9px/16px 'Liberation Sans', sans-serif;
  }

  .off {
    width: 46px;
    color: #999;
  }

  .off.small {
    font: 10px/16px 'Liberation Sans', sans-serif;
  }

  .plum {
    margin-left: 6px;
    background: linear-gradient(135deg, #fff, #cdaaec);
  }

  .func {
    width: 58px;
    margin-left: 14px;
  }

  .init {
    width: 58px;
  }

  .save {
    margin-left: 8px;
  }

  .trade {
    width: 34px;
    height: 20px;
    border: 1px solid #000;
  }

  .buy {
    background: linear-gradient(#fbe4ee, #d7588a);
  }

  .sell {
    background: linear-gradient(#e4f0cc, #6f9838);
  }

  .frame {
    border: 2px solid #6b6f76;
    border-top-width: 1px;
    border-bottom-width: 1px;
  }

  .info {
    display: flex;
    align-items: center;
    gap: 13px;
    height: 19px;
    background: #d0e0ef;
    border-bottom: 1px solid #666;
    color: #3a3d42;
    font-weight: bold;
    white-space: nowrap;
  }

  .up {
    color: #4040e8;
  }

  .price {
    margin-left: 18px;
  }

  .diff {
    margin-left: 12px;
  }

  .page {
    margin-left: auto;
  }

  .info button {
    width: 11px;
    height: 10px;
    margin: 0 2px 0 -12px;
    background: #fff;
    border: 1px solid #555;
    border-top-width: 3px;
  }

  .chart {
    width: 100%;
    height: auto;
  }

  .chart text {
    font-size: 12px;
  }

  .chart .scale {
    font-size: 13px;
  }

  .chart-foot {
    display: flex;
    align-items: center;
    height: 16px;
    background: #f0f0f0;
    border-top: 1px solid #666;
  }

  .arrow {
    width: 15px;
    height: 15px;
    flex: none;
    border: 1px solid #888;
    border-width: 0 1px 1px 0;
    font-size: 10px;
    line-height: 10px;
  }

  .track {
    display: flex;
    justify-content: flex-end;
    flex: 1;
    height: 15px;
    background: #f9f9f9;
  }

  .track span {
    width: 33%;
    background: #ececec;
    border: 1px solid #777;
    border-top-color: #fff;
  }

  .chart-foot > svg {
    margin-left: 2px;
  }

  .chart-foot input {
    width: 62px;
    height: 14px;
    margin: 0 2px 0 6px;
    appearance: none;
    background:
      linear-gradient(#777, #777) 0 4px / 100% 1px no-repeat,
      repeating-linear-gradient(90deg, #000 0 1px, transparent 1px 4px) 0 100% / 100% 4px no-repeat;
  }

  .chart-foot input::-webkit-slider-thumb {
    appearance: none;
    width: 3px;
    height: 8px;
    background: #eee;
    border: 1px solid #666;
  }

  .rail {
    display: flex;
    flex-direction: column;
    width: 33px;
    flex: none;
    padding: 9px 3px 0 4px;
    border-top: 0;
  }

  .u {
    width: 26px;
    height: 23px;
    margin-top: 3px;
    background: linear-gradient(#fafafa, #dcdcdc);
    border: 1px solid #999;
    color: #555;
    font: bold 13px/16px 'Liberation Sans', sans-serif;
  }

  .rail-box {
    width: 28px;
    margin-top: 2px;
    background: linear-gradient(90deg, #fafafa, #e2e2e2);
    border: 1px solid #777;
  }

  .rail-box button {
    width: 26px;
    height: 22px;
  }

  .rail-box text {
    fill: #555;
    stroke: none;
    text-anchor: middle;
  }

  .micro {
    font-size: 6px;
    font-weight: bold;
  }

  .word {
    font-size: 10px;
  }

  .rail-spin {
    margin-top: 12px;
    width: 28px;
    border: 1px solid #999;
  }

  .rail-spin button {
    width: 26px;
    height: 12px;
    background: linear-gradient(#fff, #ddd);
    color: #678;
    line-height: 10px;
  }

  .status {
    display: flex;
    align-items: center;
    gap: 5px;
    height: 20px;
    padding-left: 5px;
    background: #f0f0f0;
    border-top: 1px solid #c8c8d0;
    border-bottom: 1px solid #aaa;
    color: #777;
  }

  .status i {
    width: 14px;
    height: 13px;
    background: #a9a9a9;
    color: #fff;
    font: bold 11px/13px 'Liberation Sans', sans-serif;
    text-align: center;
  }

  footer {
    padding: 1px 0 0 6px;
    background: #1c2026;
    color: #aaa;
  }

  .tickers, .boards {
    display: flex;
    align-items: center;
    white-space: nowrap;
  }

  .tickers {
    height: 23px;
    padding-left: 2px;
  }

  .tickers button {
    width: 102px;
    height: 20px;
    background: linear-gradient(#3b3c42, #292a2f);
    border-right: 2px solid #17191d;
  }

  .tickers span {
    padding-left: 5px;
  }

  .trash {
    margin-left: auto;
  }

  small {
    width: 16px;
    color: #555;
    text-align: center;
    font-size: 11px;
  }

  .boards {
    height: 24px;
    border-top: 1px solid #34383e;
  }

  .board {
    display: flex;
    align-items: center;
    flex: 1;
    min-width: 0;
    height: 23px;
    padding-left: 2px;
    border-left: 1px solid #34383e;
    overflow: hidden;
  }

  .board > button {
    width: 22px;
    margin-left: auto;
    font-size: 10px;
    flex: none;
  }

  .tag {
    width: 98px;
    flex: none;
    height: 20px;
    margin-right: 2px;
    padding-left: 9px;
    background: #292a2d;
    line-height: 20px;
  }

  .cell {
    flex: 1;
    height: 20px;
    line-height: 20px;
    text-align: center;
  }

  .teal { background: #10504c; color: #48f0c8; }
  .grey { background: #2a2a2b; }
  .wine { background: #591220; color: #f52038; }
  .rust { background: #75330f; color: #ff8a1a; }

  .loss {
    margin: 0 6px 0 8px;
    color: #f01818;
  }

  .lot {
    margin-left: 8px;
    color: #ccc;
  }

  .news {
    padding-left: 3px;
    overflow: hidden;
    color: #ccc;
  }

  .board-end {
    display: flex;
    align-items: center;
    width: 80px;
    padding-left: 4px;
    flex: none;
  }

  .board-end button {
    width: 37px;
    height: 18px;
    margin-right: 5px;
    background: #34363b;
    border: 1px solid #45474c;
  }

  .board-end .cog {
    width: 20px;
  }
</style>
